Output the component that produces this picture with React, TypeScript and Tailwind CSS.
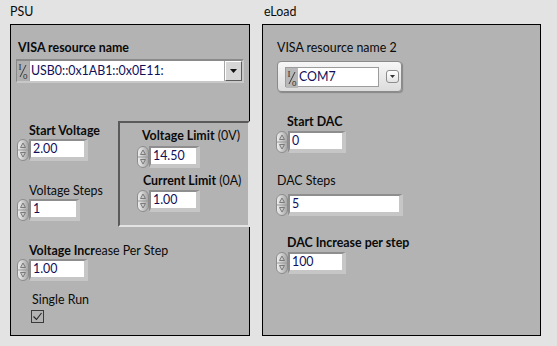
import { useId } from "react";

// small up/down increment buttons used by LabVIEW numerics
function Spinner() {
  const id = useId();
  return (
    <svg width="12" height="22" viewBox="0 0 12 22" className="shrink-0">
      <defs>
        <linearGradient id={id} x1="0" y1="0" x2="1" y2="0">
          <stop offset="0" stopColor="#f2f2f2" />
          <stop offset="1" stopColor="#a4a4a4" />
        </linearGradient>
      </defs>
      <rect x="0.5" y="0.5" width="11" height="21" rx="5.5" fill={`url(#${id})`} stroke="#8c8c8c" />
      <line x1="1" y1="11" x2="11" y2="11" stroke="#9a9a9a" />
      <path d="M6 4 L3.5 8.5 L8.5 8.5 Z" fill="none" stroke="#7a7a7a" />
      <path d="M6 18 L3.5 13.5 L8.5 13.5 Z" fill="none" stroke="#7a7a7a" />
    </svg>
  );
}

function Numeric({ value, width, className = "" }: { value: string; width: string; className?: string }) {
  return (
    <div className={"flex items-center " + className}>
      <Spinner />
      <div
        className={
          "border-t-2 border-l-2 border-r-4 border-b-4 border-t-[#8e8e8e] border-l-[#8e8e8e] border-r-[#c6c6c6] border-b-[#c6c6c6] " +
          width
        }
      >
        <div className="bg-white h-[16px] pl-[2px] leading-[16px] text-[#10105a]">{value}</div>
      </div>
    </div>
  );
}

function IoGlyph({ bg }: { bg: string }) {
  return (
    <svg width="12" height="20" viewBox="0 0 12 20" className={"shrink-0 " + bg}>
      <text x="1.5" y="9" fontSize="9" fontFamily="Liberation Serif, serif" fill="#2a2a2a">I</text>
      <line x1="9" y1="4" x2="3" y2="16" stroke="#2a2a2a" strokeWidth="0.9" />
      <text x="6" y="18" fontSize="8" fontFamily="Liberation Sans, sans-serif" fill="#2a2a2a">0</text>
    </svg>
  );
}

function Label({ children, className = "" }: { children: React.ReactNode; className?: string }) {
  return <div className={"leading-[16px] text-[#0a0a0a] whitespace-nowrap " + className}>{children}</div>;
}

export default function App() {
  return (
    <div className="w-[557px] h-[346px] bg-[#e3e3e3] flex font-['Lato','Liberation_Sans',sans-serif] text-[12.4px] overflow-hidden">
      {/* PSU */}
      <div className="ml-[10px] w-[240px] flex flex-col">
        <div className="h-[24px] pt-[4px] leading-[16px] text-[#0a0a0a]">PSU</div>
        <div className="h-[312px] border border-black bg-[#b3b3b3] flex flex-col items-start pt-[15px]">
          <Label className="ml-[7px] font-bold">VISA resource name</Label>
          <div className="ml-[5px] mt-[3px] w-[228px] h-[24px] flex items-center gap-[1px] bg-[#a6a6a6] border-t-2 border-l border-t-[#8a8a8a] border-l-[#8a8a8a] border-r-2 border-b-2 border-r-[#c8c8c8] border-b-[#c8c8c8]">
            <IoGlyph bg="bg-[#b0b0b0]" />
            <div className="flex-1 h-[20px] bg-white leading-[20px] pl-[1px] text-[#10105a]">USB0::0x1AB1::0x0E11:</div>
            <div className="w-[17px] h-[20px] bg-[#d6d6d6] border-t border-l border-t-white border-l-white border-b border-r border-b-[#5c5c5c] border-r-[#5c5c5c] flex items-center justify-center">
              <svg width="7" height="4" viewBox="0 0 7 4">
                <path d="M0 0 H7 L3.5 4 Z" fill="#111" />
              </svg>
            </div>
          </div>

          <div className="mt-[38px] flex items-start">
            <div className="w-[107px] flex flex-col items-start">
              <Label className="ml-[18px] mt-[2px] font-bold">Start Voltage</Label>
              <Numeric className="ml-[6px]" width="w-[59px]" value="2.00" />
              <Label className="ml-[18px] mt-[22px]">Voltage Steps</Label>
              <Numeric className="ml-[6px]" width="w-[51px]" value="1" />
            </div>
            <div className="w-[132px] h-[106px] border-t-2 border-l-2 border-t-[#5a5a5a] border-l-[#5a5a5a] border-r-2 border-b-2 border-r-[#e3e3e3] border-b-[#e3e3e3] flex flex-col items-start">
              <Label className="ml-[22px] mt-[5px]">
                <span className="font-bold">Voltage Limit</span> (0V)
              </Label>
              <Numeric className="ml-[17px] mt-[2px]" width="w-[51px]" value="14.50" />
              <Label className="ml-[23px] mt-[5px]">
                <span className="font-bold">Current Limit</span> (0A)
              </Label>
              <Numeric className="ml-[17px] mt-[1px]" width="w-[51px]" value="1.00" />
            </div>
          </div>

          <Label className="ml-[18px] mt-[16px]">
            <span className="font-bold">Voltage Incr</span>ease Per Step
          </Label>
          <Numeric className="ml-[6px]" width="w-[59px]" value="1.00" />
          <Label className="ml-[21px] mt-[11px]">Single Run</Label>
          <div className="ml-[20px] mt-[2px] w-[13px] h-[13px] border border-[#3a3a3a] flex items-center justify-center">
            <svg width="11" height="11" viewBox="0 0 11 11">
              <path d="M1.5 5.5 L4.5 8.5 L9.5 2" fill="none" stroke="#222" strokeWidth="1.1" />
            </svg>
          </div>
        </div>
      </div>

      {/* eLoad */}
      <div className="ml-[12px] w-[279px] flex flex-col">
        <div className="h-[24px] pt-[4px] pl-[2px] leading-[16px] text-[#0a0a0a]">eLoad</div>
        <div className="h-[312px] border border-black bg-[#b3b3b3] flex flex-col items-start pt-[15px]">
          <Label className="ml-[14px]">VISA resource name 2</Label>
          <div className="ml-[14px] mt-[5px] w-[125px] h-[31px] rounded-[4px] border border-[#8a8a8a] bg-gradient-to-b from-[#f7f7f7] to-[#dcdcdc] shadow-[1px_1px_1px_rgba(0,0,0,0.25)] flex items-center pl-[7px]">
            <div className="w-[94px] h-[20px] border border-[#9c9c9c] flex">
              <IoGlyph bg="bg-[#b8b8b8]" />
              <div className="flex-1 bg-white leading-[18px] pl-[1px] text-[#10105a]">COM7</div>
            </div>
            <div className="ml-[7px] w-[13px] h-[13px] rounded-[3px] border border-[#8c8c8c] bg-gradient-to-b from-white to-[#e4e4e4] flex items-center justify-center">
              <svg width="5" height="3" viewBox="0 0 5 3">
                <path d="M0 0 H5 L2.5 3 Z" fill="#333" />
              </svg>
            </div>
          </div>

          <Label className="ml-[24px] mt-[22px] font-bold">Start DAC</Label>
          <Numeric className="ml-[13px] mt-[1px]" width="w-[58px]" value="0" />
          <Label className="ml-[14px] mt-[20px]">DAC Steps</Label>
          <Numeric className="ml-[13px] mt-[5px]" width="w-[115px]" value="5" />
          <Label className="ml-[24px] mt-[19px] font-bold">DAC Increase per step</Label>
          <Numeric className="ml-[13px] mt-[1px]" width="w-[58px]" value="100" />
        </div>
      </div>
    </div>
  );
}
